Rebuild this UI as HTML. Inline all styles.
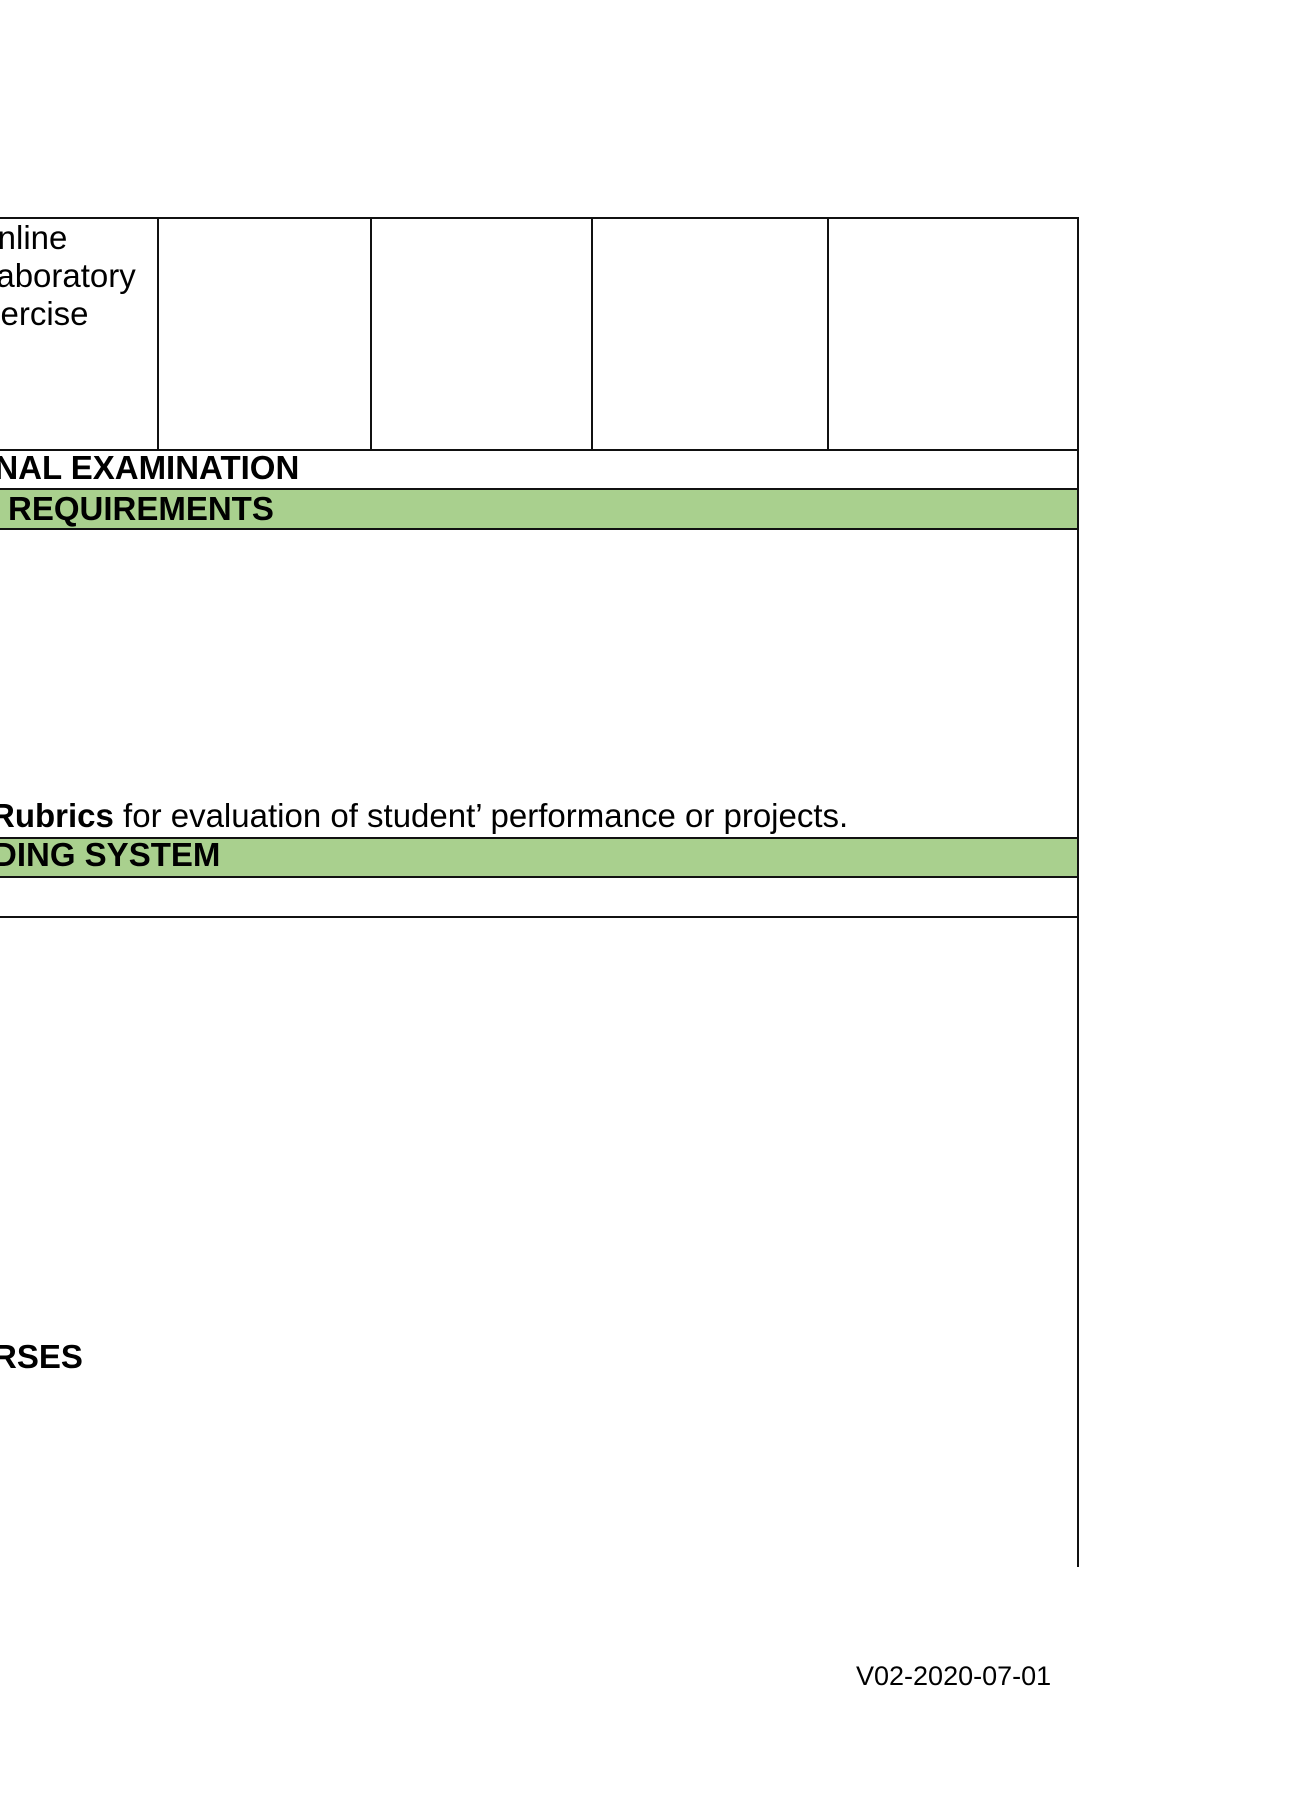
<!DOCTYPE html>
<html><head><meta charset="utf-8"><style>
html,body{margin:0;padding:0;background:#fff;}
body{width:1300px;height:1800px;position:relative;overflow:hidden;font-family:"Liberation Sans",Arial,sans-serif;color:#000;}
.h{position:absolute;height:1.5px;background:#111;}
.v{position:absolute;width:1.5px;background:#111;}
.g{position:absolute;left:0;width:1077px;background:#a9d08e;}
.t{position:absolute;font-size:33px;line-height:33px;white-space:nowrap;}
.b{font-weight:bold;}
</style></head><body>
<div class="g" style="top:488px;height:40px"></div>
<div class="g" style="top:837px;height:39px"></div>

<div class="h" style="left:0;width:1078px;top:217px"></div>
<div class="h" style="left:0;width:1078px;top:449px"></div>
<div class="h" style="left:0;width:1078px;top:488px"></div>
<div class="h" style="left:0;width:1078px;top:528px"></div>
<div class="h" style="left:0;width:1078px;top:837px"></div>
<div class="h" style="left:0;width:1078px;top:876px"></div>
<div class="h" style="left:0;width:1078px;top:916px"></div>

<div class="v" style="left:157px;top:217px;height:233px"></div>
<div class="v" style="left:370px;top:217px;height:233px"></div>
<div class="v" style="left:591px;top:217px;height:233px"></div>
<div class="v" style="left:827px;top:217px;height:233px"></div>
<div class="v" style="left:1077px;top:217px;height:1350px"></div>

<div class="t" style="left:-28px;top:221px">Online</div>
<div class="t" style="left:-22px;top:259px">Laboratory</div>
<div class="t" style="left:-38px;top:297px">Exercise</div>

<div class="t b" style="left:-35px;top:451px">FINAL EXAMINATION</div>
<div class="t b" style="left:8px;top:492px">REQUIREMENTS</div>
<div class="t" style="left:-9px;top:799px"><span class="b">Rubrics</span> for evaluation of student’ performance or projects.</div>
<div class="t b" style="left:-7px;top:838px">DING SYSTEM</div>
<div class="t b" style="left:-7px;top:1340px">RSES</div>

<div class="t" style="left:856px;top:1663px;font-size:27px;line-height:27px">V02-2020-07-01</div>
</body></html>
